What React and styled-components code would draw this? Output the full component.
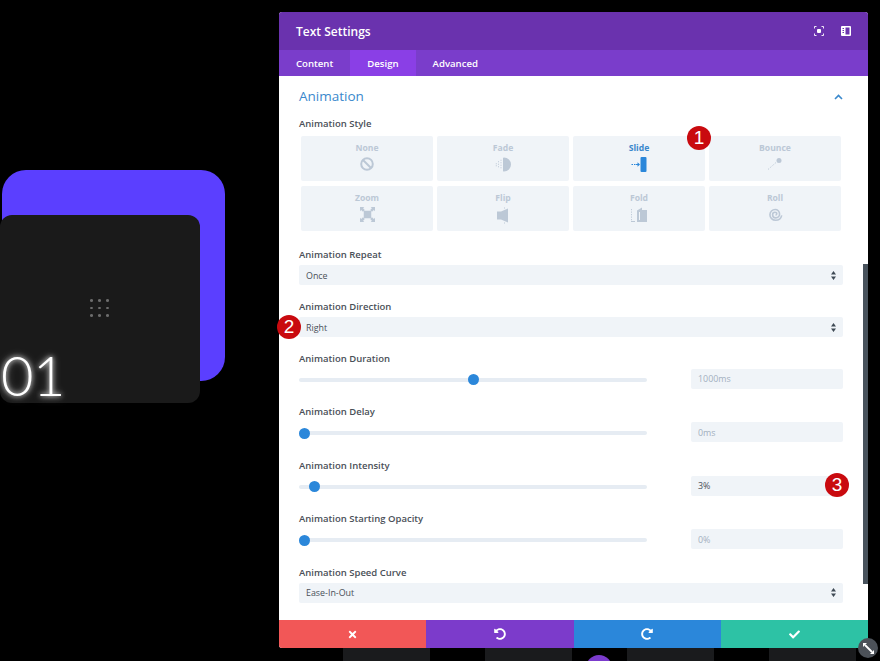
import React from "react";
import styled, { createGlobalStyle } from "styled-components";
import { FaTimes, FaUndoAlt, FaRedoAlt, FaCheck } from "react-icons/fa";

const colors = {
    header: "#6a32ae",
    tabs: "#7a3dcb",
    tabActive: "#8a3fe6",
    blue: "#2b87da",
    field: "#f0f4f8",
    text: "#4a5058",
    muted: "#a3b0bf",
    tile: "#bcc8d6",
};

const GlobalStyle = createGlobalStyle`
    html, body {
        margin: 0;
        padding: 0;
        background: #000;
    }
    * {
        box-sizing: border-box;
    }
`;

const Page = styled.div`
    position: relative;
    width: 880px;
    height: 661px;
    overflow: hidden;
    background: #000;
    font-family: "Open Sans", sans-serif;
    display: flex;
    align-items: flex-start;
`;

// page that sits behind the modal, only the tops of these show
const BackStrips = styled.div`
    position: absolute;
    left: 343px;
    bottom: 0;
    height: 13px;
    display: flex;
    gap: 55px;
`;

const BackStrip = styled.div`
    width: 87px;
    height: 13px;
    background: #1a1b1d;
`;

const BackDot = styled.div`
    position: absolute;
    left: 586px;
    top: 655px;
    width: 26px;
    height: 26px;
    border-radius: 50%;
    background: #7b3bcc;
`;

const Stage = styled.div`
    position: relative;
    flex: 0 0 279px;
    height: 661px;
`;

const BlueCard = styled.div`
    position: absolute;
    left: 2px;
    top: 170px;
    width: 223px;
    height: 211px;
    border-radius: 24px;
    background: #5b3fff;
`;

const DarkCard = styled.div`
    position: absolute;
    left: 0;
    top: 215px;
    width: 200px;
    height: 188px;
    border-radius: 12px;
    background: #1a1a1a;
`;

const DotGrid = styled.div`
    position: absolute;
    left: 90px;
    top: 84px;
    display: grid;
    grid-template-columns: repeat(3, 3px);
    gap: 5px;
`;

const Dot = styled.span`
    width: 3px;
    height: 2.6px;
    border-radius: 50%;
    background: #6c6c6c;
`;

const CardNumber = styled.div`
    position: absolute;
    left: 1px;
    top: 126px;
    font-family: "Lato", sans-serif;
    font-size: 56px;
    font-weight: 300;
    line-height: 68px;
    letter-spacing: -0.5px;
    color: #fff;
    text-shadow: 0 0 5px rgba(255, 255, 255, 0.9), 0 0 9px rgba(255, 255, 255, 0.5);
`;

const Modal = styled.div`
    position: relative;
    flex: 0 0 589px;
    margin-top: 12px;
    height: 636px;
    display: flex;
    flex-direction: column;
    background: #fff;
    border-radius: 3px;
`;

const Header = styled.div`
    height: 38px;
    flex: none;
    padding: 0 17px;
    display: flex;
    align-items: center;
    justify-content: space-between;
    background: ${colors.header};
    border-radius: 3px 3px 0 0;
`;

const Title = styled.div`
    font-size: 12px;
    font-weight: 600;
    color: #fff;
`;

const HeaderIcons = styled.div`
    display: flex;
    gap: 17px;
`;

const Tabs = styled.div`
    height: 26px;
    flex: none;
    display: flex;
    background: ${colors.tabs};
`;

const Tab = styled.div`
    padding: 0 17px;
    display: flex;
    align-items: center;
    font-size: 9.6px;
    font-weight: 600;
    color: #fff;
    background: ${(p) => (p.$active ? colors.tabActive : "transparent")};
`;

const Body = styled.div`
    position: relative;
    flex: 1;
    padding: 11px 25px 0 20px;
    overflow: hidden;
`;

const SectionHead = styled.div`
    height: 19px;
    display: flex;
    align-items: center;
    justify-content: space-between;
`;

const SectionTitle = styled.div`
    font-size: 13.5px;
    line-height: 19px;
    color: #3a88cc;
`;

const Label = styled.div`
    font-size: 9.5px;
    line-height: 14px;
    font-weight: 600;
    color: ${colors.text};
    margin-bottom: 3px;
`;

const Field = styled.div`
    margin-top: ${(p) => p.$top}px;
`;

const TileGrid = styled.div`
    display: grid;
    grid-template-columns: repeat(4, 132px);
    grid-auto-rows: 45px;
    gap: 5px 4px;
    margin: 5px 2px 0;
`;

const Tile = styled.div`
    display: flex;
    flex-direction: column;
    align-items: center;
    padding-top: 6px;
    border-radius: 2px;
    background: ${colors.field};
    color: ${(p) => (p.$active ? "#3a88cc" : colors.tile)};
    font-size: 8.6px;
    line-height: 12px;
    font-weight: 700;
    svg {
        margin-top: 3px;
        color: ${(p) => (p.$active ? colors.blue : colors.tile)};
    }
`;

const Select = styled.div`
    height: 20px;
    padding: 0 7px;
    display: flex;
    align-items: center;
    justify-content: space-between;
    border-radius: 2px;
    background: ${colors.field};
    font-size: 8.9px;
    font-weight: 500;
    color: ${colors.text};
`;

const SliderRow = styled.div`
    display: flex;
    align-items: center;
    justify-content: space-between;
`;

const Track = styled.div`
    position: relative;
    width: 348px;
    height: 4px;
    margin-top: 2px;
    border-radius: 2px;
    background: #e6ecf3;
`;

const Knob = styled.span`
    position: absolute;
    top: -3.5px;
    width: 11px;
    height: 11px;
    margin-left: -5.5px;
    border-radius: 50%;
    background: ${colors.blue};
`;

const NumberBox = styled.div`
    width: 152px;
    height: 20px;
    padding: 0 7px;
    display: flex;
    align-items: center;
    border-radius: 2px;
    background: ${colors.field};
    font-size: 8.9px;
    font-weight: 500;
    color: ${(p) => (p.$set ? colors.text : colors.muted)};
`;

const Scrollbar = styled.div`
    position: absolute;
    right: 0;
    top: 188px;
    width: 5px;
    height: 320px;
    background: #48525c;
`;

const Footer = styled.div`
    height: 28px;
    flex: none;
    display: grid;
    grid-template-columns: repeat(4, 1fr);
`;

const FooterButton = styled.div`
    display: flex;
    align-items: center;
    justify-content: center;
    color: #fff;
    font-size: ${(p) => p.$size}px;
    background: ${(p) => p.$bg};
    border-radius: ${(p) => p.$radius || "0"};
`;

const Badge = styled.div`
    position: absolute;
    left: ${(p) => p.$x - 12}px;
    top: ${(p) => p.$y - 12}px;
    width: 24px;
    height: 24px;
    display: flex;
    align-items: center;
    justify-content: center;
    border-radius: 50%;
    background: #c90a0f;
    color: #fff;
    font-family: "Liberation Sans", sans-serif;
    font-size: 19px;
    line-height: 24px;
`;

const Resize = styled.div`
    position: absolute;
    left: 858px;
    top: 638px;
    width: 20px;
    height: 20px;
    display: flex;
    align-items: center;
    justify-content: center;
    border-radius: 50%;
    background: #4c5158;
`;

const NoneIcon = () => (
    <svg width="14" height="14" viewBox="0 0 14 14" fill="none" stroke="currentColor" strokeWidth="2">
        <circle cx="7" cy="7" r="5.8" />
        <path d="M3 3l8 8" />
    </svg>
);

const FadeIcon = () => (
    <svg width="16" height="15" viewBox="0 0 16 15" fill="currentColor">
        <path d="M9 .5a7 7 0 0 1 0 14c-.6 0-1-.2-1-.6V1.100c0-.4.4-.6 1-.6z" />
        <path d="M5.500 2.800h1v1h-1zM5.500 5.300h1v1h-1zM5.500 7.800h1v1h-1zM5.500 10.300h1v1h-1zM3 4.300h1v1H3zM3 6.800h1v1H3zM3 9.300h1v1H3zM.8 6.300h1v1h-1zM.8 8.300h1v1h-1z" />
    </svg>
);

const SlideIcon = () => (
    <svg width="16" height="15" viewBox="0 0 16 15" fill="currentColor">
        <rect x="9.500" y="0" width="6" height="15" rx="1" />
        <path d="M.5 7h1.500v1H.5zM3 7h1.500v1H3zM5 7h1.500V5.300L9 7.500l-2.500 2.200V8H5z" />
    </svg>
);

const BounceIcon = () => (
    <svg width="16" height="14" viewBox="0 0 16 14" fill="none" stroke="currentColor">
        <path d="M1 12.500l8-7" strokeWidth="0.9" strokeDasharray="1.500 1.500" />
        <circle cx="12" cy="3.500" r="2.500" fill="currentColor" stroke="none" />
    </svg>
);

const ZoomIcon = () => (
    <svg width="15" height="15" viewBox="0 0 14 14" fill="currentColor">
        <rect x="3.500" y="3.500" width="7" height="7" />
        <path d="M0 0h4L2.900 1.100 4.500 2.800 2.800 4.500 1.100 2.900 0 4zM14 0v4l-1.100-1.100-1.700 1.600-1.700-1.700 1.600-1.700L10 0zM0 14v-4l1.100 1.100 1.700-1.600 1.700 1.700-1.600 1.700L4 14zM14 14h-4l1.100-1.100-1.600-1.700 1.700-1.700 1.700 1.600L14 10z" />
    </svg>
);

const FlipIcon = () => (
    <svg width="14" height="17" viewBox="0 0 14 16" fill="currentColor">
        <path d="M12 1v14L5 12H1V4h4z" />
        <path d="M8 0h1v1H8zM8 15h1v1H8z" />
    </svg>
);

const FoldIcon = () => (
    <svg width="18" height="15" viewBox="0 0 18 15" fill="currentColor">
        <path d="M7 3.500L12 .5V3h5v12H7z" />
        <path d="M9.500 5v8" stroke="#f0f4f8" fill="none" />
        <path d="M1 2h.9v1.200H1zM1 4.500h.9v1.200H1zM1 7h.9v1.200H1zM1 9.500h.9v1.200H1zM1 12h.9v1.200H1zM1 14h4v.9H1z" />
    </svg>
);

const RollIcon = () => (
    <svg width="15" height="15" viewBox="0 0 14 14" fill="none" stroke="currentColor" strokeWidth="1.500">
        <path d="M7 7.500c.8 0 1.200-.5 1.200-1.100 0-.9-.8-1.500-1.700-1.500-1.300 0-2.200 1.100-2.200 2.300 0 1.700 1.300 2.900 3 2.900 2 0 3.500-1.600 3.500-3.600C10.800 4 8.900 2.300 6.700 2.300 4 2.300 1.800 4.400 1.800 7.200c0 2.900 2.300 5.200 5.300 5.200 3 0 5.100-2.100 5.700-4.600" />
    </svg>
);

const FocusIcon = () => (
    <svg width="10" height="10" viewBox="0 0 10 10" fill="none" stroke="#fff" strokeWidth="0.9">
        <path d="M.5 2.500v-2h2M7.500.5h2v2M9.500 7.500v2h-2M2.500 9.500h-2v-2" />
        <rect x="3" y="3" width="4" height="4" rx="1" fill="#fff" stroke="none" />
    </svg>
);

const SplitIcon = () => (
    <svg width="10" height="10" viewBox="0 0 10 10">
        <path fillRule="evenodd" fill="#fff" d="M1 0h8a1 1 0 0 1 1 1v8a1 1 0 0 1-1 1H1a1 1 0 0 1-1-1V1a1 1 0 0 1 1-1zM4.500 1.500v7H8.500v-7zM1.500 2v1h1.500V2zM1.500 4v1h1.500V4zM1.500 6v1h1.500V6z" />
    </svg>
);

const ChevronUp = () => (
    <svg width="9" height="6" viewBox="0 0 9 6" fill="none" stroke="#3a88cc" strokeWidth="1.600">
        <path d="M1 5l3.500-3.500L8 5" />
    </svg>
);

const SelectArrows = () => (
    <svg width="5" height="9" viewBox="0 0 5 9" fill="#3f4a55">
        <path d="M2.500 0L5 3.500H0zM2.500 9L0 5.500h5z" />
    </svg>
);

const ResizeIcon = () => (
    <svg width="13" height="13" viewBox="0 0 13 13" fill="#fff" stroke="#fff">
        <path d="M3 3l7 7" strokeWidth="1.800" />
        <path d="M1 1h4L1 5zM12 12H8l4-4z" stroke="none" />
    </svg>
);

const tiles = [
    { name: "None", icon: <NoneIcon /> },
    { name: "Fade", icon: <FadeIcon /> },
    { name: "Slide", icon: <SlideIcon />, active: true },
    { name: "Bounce", icon: <BounceIcon /> },
    { name: "Zoom", icon: <ZoomIcon /> },
    { name: "Flip", icon: <FlipIcon /> },
    { name: "Fold", icon: <FoldIcon /> },
    { name: "Roll", icon: <RollIcon /> },
];

function SelectField({ label, value, top }) {
    return (
        <Field $top={top}>
            <Label>{label}</Label>
            <Select>
                {value}
                <SelectArrows />
            </Select>
        </Field>
    );
}

function SliderField({ label, value, pos, set, top }) {
    return (
        <Field $top={top}>
            <Label>{label}</Label>
            <SliderRow>
                <Track>
                    <Knob style={{ left: pos }} />
                </Track>
                <NumberBox $set={set}>{value}</NumberBox>
            </SliderRow>
        </Field>
    );
}

export default function App() {
    return (
        <Page>
            <GlobalStyle />
            <BackStrips>
                <BackStrip />
                <BackStrip />
                <BackStrip />
                <BackStrip />
            </BackStrips>
            <BackDot />
            <Stage>
                <BlueCard />
                <DarkCard>
                    <DotGrid>
                        {Array.from({ length: 9 }).map((_, i) => (
                            <Dot key={i} />
                        ))}
                    </DotGrid>
                    <CardNumber>01</CardNumber>
                </DarkCard>
            </Stage>
            <Modal>
                <Header>
                    <Title>Text Settings</Title>
                    <HeaderIcons>
                        <FocusIcon />
                        <SplitIcon />
                    </HeaderIcons>
                </Header>
                <Tabs>
                    <Tab>Content</Tab>
                    <Tab $active>Design</Tab>
                    <Tab>Advanced</Tab>
                </Tabs>
                <Body>
                    <SectionHead>
                        <SectionTitle>Animation</SectionTitle>
                        <ChevronUp />
                    </SectionHead>
                    <Field $top={11}>
                        <Label>Animation Style</Label>
                        <TileGrid>
                            {tiles.map((tile) => (
                                <Tile key={tile.name} $active={tile.active}>
                                    {tile.name}
                                    {tile.icon}
                                </Tile>
                            ))}
                        </TileGrid>
                    </Field>
                    <SelectField label="Animation Repeat" value="Once" top={17} />
                    <SelectField label="Animation Direction" value="Right" top={15} />
                    <SliderField label="Animation Duration" value="1000ms" pos="174px" top={14.5} />
                    <SliderField label="Animation Delay" value="0ms" pos="5px" top={16.5} />
                    <SliderField label="Animation Intensity" value="3%" pos="15px" set top={16.5} />
                    <SliderField label="Animation Starting Opacity" value="0%" pos="5px" top={16.5} />
                    <SelectField label="Animation Speed Curve" value="Ease-In-Out" top={16.5} />
                    <Scrollbar />
                </Body>
                <Footer>
                    <FooterButton $bg="#f25757" $size={11} $radius="0 0 0 3px"><FaTimes /></FooterButton>
                    <FooterButton $bg="#7c3bcb" $size={12}><FaUndoAlt /></FooterButton>
                    <FooterButton $bg="#2b87da" $size={12}><FaRedoAlt /></FooterButton>
                    <FooterButton $bg="#2dc2a5" $size={11} $radius="0 0 3px 0"><FaCheck /></FooterButton>
                </Footer>
            </Modal>
            <Badge $x={699} $y={138}>1</Badge>
            <Badge $x={289} $y={327}>2</Badge>
            <Badge $x={837} $y={485}>3</Badge>
            <Resize>
                <ResizeIcon />
            </Resize>
        </Page>
    );
}
